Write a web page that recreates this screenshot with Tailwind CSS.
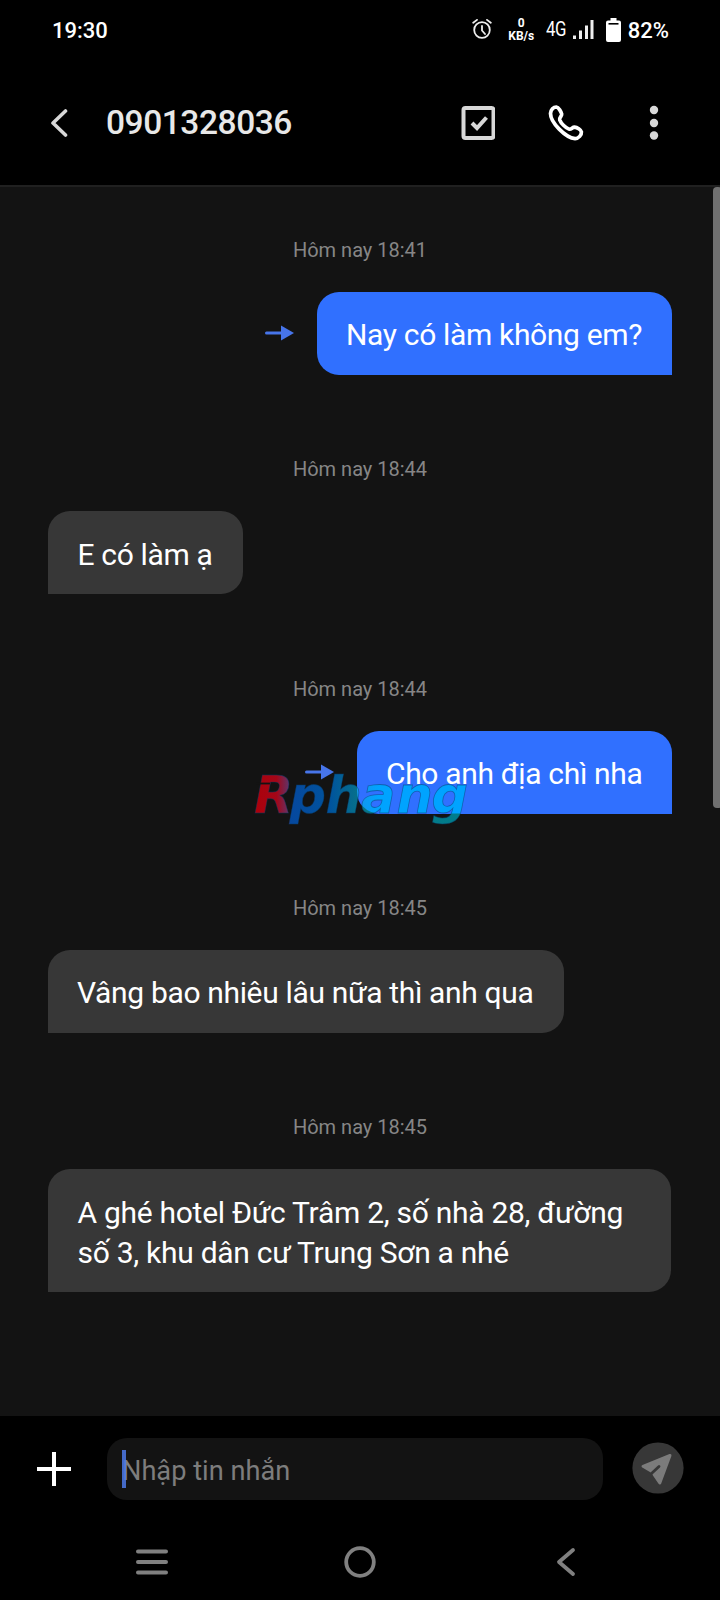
<!DOCTYPE html>
<html lang="vi">
<head>
<meta charset="utf-8">
<title>0901328036</title>
<script src="https://cdn.jsdelivr.net/npm/@tailwindcss/browser@4"></script>
</head>
<body class="bg-black">
<div class="relative flex h-[1600px] w-[720px] flex-col overflow-hidden bg-black font-[Roboto,sans-serif] text-white">

  <!-- Status bar -->
  <div class="flex h-[60px] shrink-0 items-center justify-between pl-[52px] pr-[51px]">
    <span class="pt-[2px] text-[22px] font-medium leading-[58px]">19:30</span>
    <div class="flex items-center">
      <svg class="mr-[16px]" width="20" height="22" viewBox="0 0 20 22" fill="none" stroke="#eee" stroke-width="1.8" stroke-linecap="round"><circle cx="10" cy="11" r="7.800"/><path d="M10 7v4.500l3 3.500M1.200 3.800 5 .9M18.800 3.800 15 .9"/></svg>
      <div class="mr-[11px] flex w-[27px] flex-col items-center text-[12px] font-bold leading-[13px]"><span>0</span><span>KB/s</span></div>
      <span class="mb-[2px] mr-[6px] w-[20px] origin-left scale-x-[0.84] text-[20px] leading-none tracking-[-0.5px]">4G</span>
      <svg class="mr-[12px]" width="22" height="20" viewBox="0 0 22 20" fill="#eee"><path d="M1 15.500h3V19H1zM7 10.500h3V19H7zM13 5.500h3V19h-3zM18.500 0h3v19h-3z"/></svg>
      <svg class="mb-[1px] mr-[7px]" width="15" height="24" viewBox="0 0 15 24"><path d="M4.500 0h6v2.500H13a2 2 0 0 1 2 2V22a2 2 0 0 1-2 2H2a2 2 0 0 1-2-2V4.500a2 2 0 0 1 2-2h2.500z" fill="#fff"/><path d="M2.500 5.800h10" stroke="#000" stroke-width="1.600"/></svg>
      <span class="pt-[2px] text-[22px] font-medium leading-none">82%</span>
    </div>
  </div>

  <!-- Conversation header -->
  <header class="flex h-[125px] shrink-0 items-center pl-[50px] pr-[61px]">
    <svg class="mr-[38px]" width="18" height="30" viewBox="0 0 18 30" fill="none" stroke="#d8d8d8" stroke-width="3.600" stroke-linecap="round" stroke-linejoin="round"><path d="M15.500 3 3 15l12.500 12"/></svg>
    <h1 class="flex-1 text-[33.500px] font-medium leading-[126px] tracking-[-0.45px] text-[#e8e8e8]">0901328036</h1>
    <svg class="mr-[53px] mt-px" width="34" height="34" viewBox="0 0 34 34" fill="none" stroke="#d8d8d8"><rect x="2.500" y="2" width="30" height="30" rx="2" stroke-width="4"/><path d="m11 17 5 5 9.500-10.500" stroke-width="4"/></svg>
    <svg class="mr-[65px] mt-px" width="36" height="36" viewBox="0 0 36 36" fill="none" stroke="#fff" stroke-width="3.700" stroke-linejoin="round"><path d="M2.500 8.500C2.800 4.800 5.500 2 8.300 2c2.300.3 5 5 5.400 7.200.3 1.800-2.700 3.400-2 5.600 1.300 3.500 5.700 7.900 9.300 9.300 2.300.8 3.300-2.100 5.500-2 2.500.2 6.500 2.700 6.900 4.800.3 3-2.800 6.700-6.300 6.700C17.500 32.800 2.500 17.500 2.500 8.500z"/></svg>
    <svg class="mt-px" width="10" height="36" viewBox="0 0 10 36" fill="#d8d8d8"><circle cx="5" cy="5" r="4.200"/><circle cx="5" cy="18" r="4.200"/><circle cx="5" cy="30.500" r="4.200"/></svg>
  </header>

  <!-- Messages -->
  <main class="flex h-[1231px] shrink-0 flex-col border-t-2 border-[#202020] bg-[#131313] pl-[48px] pr-[48px] text-[30px] leading-[40px] tracking-[-0.34px]">
    <section class="flex h-[219.300px] shrink-0 flex-col pt-[51px]">
      <time class="mb-[30px] text-center text-[20px] leading-[24px] tracking-normal text-[#868686]">Hôm nay 18:41</time>
      <div class="flex items-center justify-end">
        <svg class="mb-[2px] mr-[22px]" width="30" height="18" viewBox="0 0 30 18"><path d="M1.500 9H17" stroke="#4775ea" stroke-width="3" stroke-linecap="round"/><path d="M16 1.500 29 9l-13 7.500z" fill="#4775ea"/></svg>
        <p class="h-[83px] w-[355px] whitespace-nowrap rounded-[22px] rounded-br-none bg-[#3070ff] pl-[29px] pt-[23px]">Nay có làm không em?</p>
      </div>
    </section>
    <section class="flex h-[219.300px] shrink-0 flex-col pt-[51px]">
      <time class="mb-[30px] text-center text-[20px] leading-[24px] tracking-normal text-[#868686]">Hôm nay 18:44</time>
      <p class="h-[83px] w-[194.500px] whitespace-nowrap rounded-[22px] rounded-bl-none bg-[#373737] pl-[29.500px] pt-[24px]">E có làm ạ</p>
    </section>
    <section class="flex h-[219.300px] shrink-0 flex-col pt-[51px]">
      <time class="mb-[30px] text-center text-[20px] leading-[24px] tracking-normal text-[#868686]">Hôm nay 18:44</time>
      <div class="flex items-center justify-end">
        <svg class="mb-px mr-[22px]" width="30" height="18" viewBox="0 0 30 18"><path d="M1.500 9H17" stroke="#4775ea" stroke-width="3" stroke-linecap="round"/><path d="M16 1.500 29 9l-13 7.500z" fill="#4775ea"/></svg>
        <p class="h-[83px] w-[315px] whitespace-nowrap rounded-[22px] rounded-br-none bg-[#3070ff] pl-[29px] pt-[23px]">Cho anh địa chì nha</p>
      </div>
    </section>
    <section class="flex h-[219.300px] shrink-0 flex-col pt-[51px]">
      <time class="mb-[30px] text-center text-[20px] leading-[24px] tracking-normal text-[#868686]">Hôm nay 18:45</time>
      <p class="h-[83px] w-[516px] whitespace-nowrap rounded-[22px] rounded-bl-none bg-[#373737] pl-[29px] pt-[23px]">Vâng bao nhiêu lâu nữa thì anh qua</p>
    </section>
    <section class="flex shrink-0 flex-col pt-[51px]">
      <time class="mb-[30px] text-center text-[20px] leading-[24px] tracking-normal text-[#868686]">Hôm nay 18:45</time>
      <p class="h-[123px] w-[623px] whitespace-nowrap rounded-[22px] rounded-bl-none bg-[#373737] pl-[29.500px] pt-[24px] tracking-[-0.28px]">A ghé hotel Đức Trâm 2, số nhà 28, đường<br>số 3, khu dân cư Trung Sơn a nhé</p>
    </section>
  </main>

  <!-- Composer -->
  <footer class="flex h-[106px] shrink-0 items-center pl-[37px] pr-[36px]">
    <svg class="mr-[36px]" width="34" height="34" viewBox="0 0 34 34" stroke="#fff" stroke-width="4"><path d="M17 0v34M0 17h34"/></svg>
    <div class="relative h-[62px] w-[496px] rounded-[20px] bg-[#131313] pl-[15px] text-[27.200px] leading-[66px] text-[#7d7d7d]">Nhập tin nhắn<span class="absolute left-[15px] top-[12px] h-[38px] w-[4px] bg-[#4d79e8]/85"></span></div>
    <svg class="mb-[3px] ml-[29px]" width="52" height="52" viewBox="0 0 52 52"><circle cx="26" cy="26" r="25.600" fill="#373737"/><path d="M38 13.500 11 24.300l8.500 5 7.500-5.300-5 8.500 5.800 8.500z" fill="#7b7b7b" stroke="#7b7b7b" stroke-width="3" stroke-linejoin="round"/><path d="m20 31 7-6.500" stroke="#373737" stroke-width="2.800" stroke-linecap="round"/></svg>
  </footer>

  <!-- Navigation bar -->
  <nav class="flex h-[78px] shrink-0 items-center pl-[136px] pr-[143px] pt-[2px]">
    <svg width="32" height="26" viewBox="0 0 32 26" stroke="#808080" stroke-width="4" stroke-linecap="round"><path d="M2 2.500h28M2 13h28M2 23.500h28"/></svg>
    <svg class="ml-[176px]" width="32" height="32" viewBox="0 0 32 32" fill="none" stroke="#808080" stroke-width="3.800"><circle cx="16" cy="16" r="13.800"/></svg>
    <svg class="ml-[180px]" width="21" height="30" viewBox="0 0 21 30" fill="none" stroke="#808080" stroke-width="3.800" stroke-linecap="round" stroke-linejoin="round"><path d="M17 3 3 15l14 12"/></svg>
  </nav>

  <!-- Scrollbar -->
  <div class="absolute left-[713px] top-[187px] h-[621px] w-[9px] rounded-[4px] bg-[#707070]"></div>

  <!-- Watermark -->
  <svg class="absolute left-[245px] top-[760px] font-['DejaVu_Sans',sans-serif] text-[51px] font-bold italic" width="230" height="72" viewBox="245 760 230 72">
    <defs>
      <linearGradient id="dark" gradientUnits="userSpaceOnUse" x1="253" y1="0" x2="467" y2="0">
        <stop offset="0" stop-color="#ad0009"/><stop offset=".11" stop-color="#a40618"/><stop offset=".165" stop-color="#653063"/><stop offset=".175" stop-color="#06489e"/><stop offset=".36" stop-color="#00539d"/><stop offset=".52" stop-color="#087786"/><stop offset="1" stop-color="#007d8c"/>
      </linearGradient>
      <linearGradient id="light" gradientUnits="userSpaceOnUse" x1="357" y1="0" x2="467" y2="0"><stop offset="0" stop-color="#1595ea"/><stop offset=".2" stop-color="#00a3ff"/><stop offset="1" stop-color="#00a3ff"/></linearGradient>
      <pattern id="ink" patternUnits="userSpaceOnUse" x="0" y="0" width="720" height="900">
        <rect x="240" y="750" width="240" height="90" fill="url(#dark)"/>
        <path d="M357 730H480V813.500H379a22 22 0 0 1-22-22z" fill="url(#light)"/>
      </pattern>
    </defs>
    <text x="254 289.500 325.500 361 396.500 431.500" y="813" fill="url(#ink)" stroke="#083a66" stroke-opacity=".5" stroke-width=".8">Rphang</text>
    <path d="M256 783.500h14" stroke="#131313" stroke-width="1.800"/>
  </svg>
</div>
</body>
</html>
